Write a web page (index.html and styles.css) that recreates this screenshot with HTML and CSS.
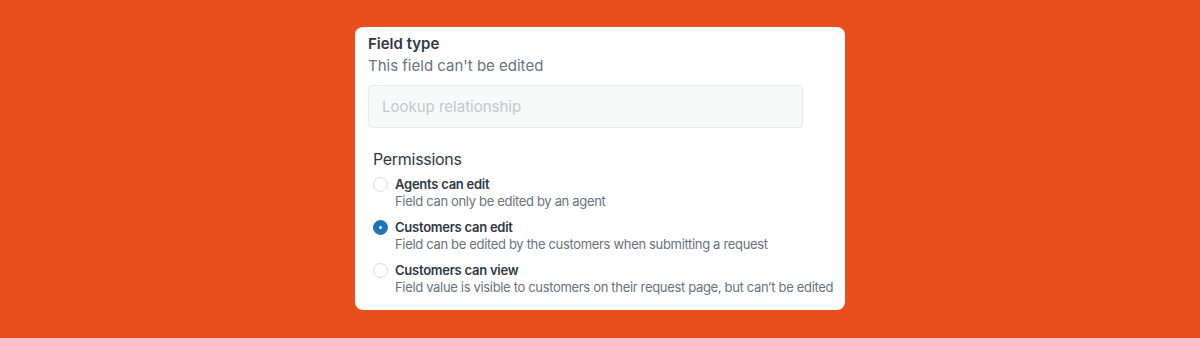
FILE: index.html
```html
<!DOCTYPE html>
<html>
<head>
  <title>Field type</title>
  <link rel="stylesheet" href="styles.css">
</head>
<body>
  <div class="card">
    <div class="field-title">Field type</div>
    <div class="field-hint">This field can't be edited</div>
    <input class="field-input" type="text" placeholder="Lookup relationship" disabled>

    <div class="perm">
      <div class="perm-title">Permissions</div>

      <label class="option">
        <span class="radio"></span>
        <span class="option-text">
          <span class="option-label">Agents can edit</span>
          <span class="option-desc">Field can only be edited by an agent</span>
        </span>
      </label>

      <label class="option">
        <span class="radio checked"></span>
        <span class="option-text">
          <span class="option-label">Customers can edit</span>
          <span class="option-desc">Field can be edited by the customers when submitting a request</span>
        </span>
      </label>

      <label class="option">
        <span class="radio"></span>
        <span class="option-text">
          <span class="option-label">Customers can view</span>
          <span class="option-desc">Field value is visible to customers on their request page, but can’t be edited</span>
        </span>
      </label>
    </div>
  </div>
</body>
</html>
```

FILE: styles.css
```css
body {
  font-family: Inter, "Liberation Sans", Arial, sans-serif;
  background-color: #e94f1e;
  margin: 0;
  padding-top: 27px;
  color: #2f3941;
}

.card {
  width: 477px;
  margin-left: 355px;
  background-color: #fff;
  border-radius: 8px;
  padding: 8px 0 14px 13px;
}

.field-title {
  font-size: 15px;
  font-weight: 600;
  line-height: 18px;
}

.field-hint {
  font-size: 15px;
  color: #68737d;
  line-height: 22px;
  margin-top: 2px;
}

.field-input {
  display: block;
  box-sizing: border-box;
  width: 435px;
  height: 43px;
  margin-top: 8px;
  padding: 0 13px;
  font-family: inherit;
  font-size: 15px;
  background-color: #f8f9f9;
  border: 1px solid #e9ebed;
  border-radius: 4px;
}

.field-input::placeholder {
  color: #c2c8cc;
}

.perm {
  margin-top: 20px;
  padding-left: 5px;
}

.perm-title {
  font-size: 16px;
  letter-spacing: -0.3px;
  line-height: 22px;
}

.option {
  display: flex;
  gap: 7px;
  margin-top: 5px;
}

.option + .option {
  margin-top: 8px;
}

.radio {
  box-sizing: border-box;
  width: 15px;
  height: 15px;
  margin-top: 2px;
  border: 1px solid #d8dcde;
  border-radius: 50%;
  flex-shrink: 0;
}

.radio.checked {
  background-color: #1f73b7;
  border-color: #1f73b7;
  position: relative;
}

.radio.checked::after {
  content: "";
  position: absolute;
  left: 5px;
  top: 5px;
  width: 3px;
  height: 3px;
  border-radius: 50%;
  background-color: #fff;
}

.option-text {
  display: flex;
  flex-direction: column;
}

.option-label {
  font-size: 13px;
  font-weight: 600;
  letter-spacing: -0.25px;
  line-height: 18px;
}

.option-desc {
  font-size: 13px;
  letter-spacing: -0.33px;
  color: #68737d;
  line-height: 17px;
}
```
